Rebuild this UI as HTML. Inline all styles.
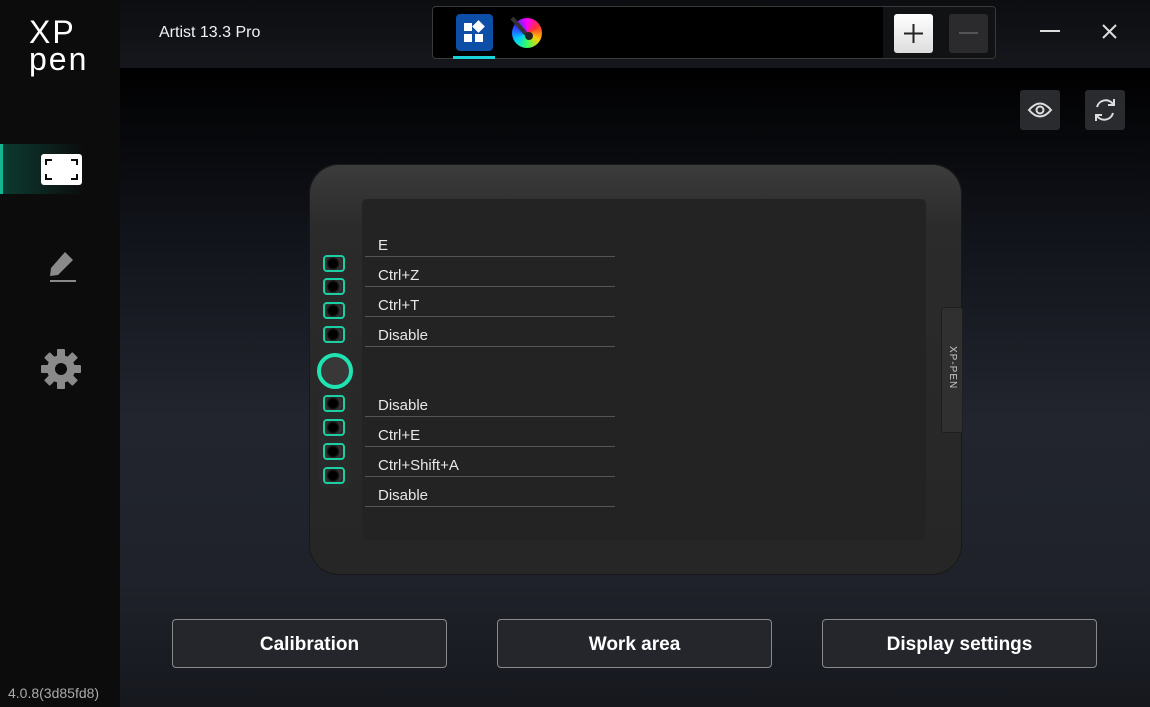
<!DOCTYPE html>
<html><head><meta charset="utf-8"><style>
*{margin:0;padding:0;box-sizing:border-box}
body{width:1150px;height:707px;overflow:hidden;background:#000;font-family:"Liberation Sans",Arial,sans-serif;position:relative;color:#eee}
.side{position:absolute;left:0;top:0;width:120px;height:707px;background:#0c0c0c}
.main{position:absolute;left:120px;top:68px;width:1030px;height:639px;background:linear-gradient(180deg,#000 0%,#11131a 25%,#22252e 55%,#1f222a 80%,#16181e 100%)}
.top{position:absolute;left:120px;top:0;width:1030px;height:68px;background:linear-gradient(180deg,#0c0d10,#15171c)}
.logo{position:absolute;left:29px;top:19px;color:#fff;font-size:32px;line-height:27px;letter-spacing:2px;font-weight:normal}
.act{position:absolute;left:0;top:144px;width:120px;height:50px;background:linear-gradient(90deg,#0c3a30,#0c0c0c 70%);border-left:3px solid #13b592}
.title{position:absolute;left:159px;top:24px;font-size:16px;color:#f2f2f2}
.tabs{position:absolute;left:432px;top:6px;width:564px;height:53px;border:1px solid #3a3a3a;border-radius:4px;background:#000}
.tabs .r{position:absolute;left:450px;top:0;right:0;bottom:0;background:#111214;border-radius:0 4px 4px 0}
.btn{position:absolute;border:1px solid #8a8a8a;border-radius:4px;background:#24262b;color:#fff;font-weight:bold;font-size:19px;text-align:center;line-height:49px;height:49px;width:275px;top:619px}
.sq{position:absolute;width:40px;height:40px;background:#2a2b2f;border-radius:3px}
.tab{position:absolute;left:309px;top:164px;width:653px;height:411px;border-radius:30px;background:linear-gradient(180deg,#3c3c3c,#2b2b2b 15%,#262626);box-shadow:inset 0 0 0 1px #181818}
.scr{position:absolute;left:53px;top:35px;width:564px;height:341px;background:#232323;border-radius:5px}
.row{position:absolute;left:56px;width:250px;height:30px;border-bottom:1px solid #555;font-size:15px;color:#e8e8e8;padding:10px 0 0 13px;line-height:18px}
.k{position:absolute;left:14px;width:22px;height:17px;border:2px solid #1ccfa3;border-radius:4px;background:radial-gradient(circle at 45% 50%,#000 35%,#333 60%,#222)}
.ring{position:absolute;left:8px;top:189px;width:36px;height:36px;border:4px solid #20e3b2;border-radius:50%;background:#383838}
.stab{position:absolute;left:632px;top:143px;width:22px;height:126px;background:#303030;border-radius:3px;border:1px solid #1e1e1e}
</style></head><body>
<div class="side">
<div class="logo">XP<br>pen</div>
<div class="act"></div>
<svg style="position:absolute;left:41px;top:154px" width="41" height="31"><rect width="41" height="31" rx="3" fill="#fff"/><path d="M5 11V6h6M30 6h6v5M36 20v5h-6M11 25H5v-5" stroke="#0c0c0c" stroke-width="2" fill="none"/></svg>
<svg style="position:absolute;left:44px;top:250px" width="34" height="34"><path d="M21 2l8 8-15 15-8 1 1-8z" fill="#8a8a8a"/><rect x="6" y="30" width="26" height="2" fill="#8a8a8a"/></svg>
<svg style="position:absolute;left:40px;top:348px" width="42" height="42" viewBox="-21 -21 42 42"><g fill="#8a8a8a"><circle r="14"/><g id="t"><rect x="-4" y="-20" width="8" height="10" rx="1"/></g><use href="#t" transform="rotate(45)"/><use href="#t" transform="rotate(90)"/><use href="#t" transform="rotate(135)"/><use href="#t" transform="rotate(180)"/><use href="#t" transform="rotate(225)"/><use href="#t" transform="rotate(270)"/><use href="#t" transform="rotate(315)"/></g><circle r="6" fill="#0c0c0c"/></svg>
<div style="position:absolute;left:8px;top:685px;font-size:14px;color:#aaa">4.0.8(3d85fd8)</div>
</div>
<div class="top"></div>
<div class="main"></div>
<div class="title">Artist 13.3 Pro</div>
<div class="tabs"><div class="r"></div>
<svg style="position:absolute;left:23px;top:7px" width="37" height="37"><rect width="37" height="37" rx="4" fill="#0d4ea6"/><rect x="8" y="9" width="8" height="8" fill="#fff"/><rect x="8" y="20" width="8" height="8" fill="#fff"/><rect x="19" y="20" width="8" height="8" fill="#fff"/><rect x="18" y="8" width="9" height="9" fill="#fff" transform="rotate(45 22.5 12.5)"/></svg>
<div style="position:absolute;left:20px;top:49px;width:42px;height:3px;background:#19d3d8"></div>
<div style="position:absolute;left:79px;top:11px;width:30px;height:30px;border-radius:50%;background:conic-gradient(#f0f,#f33,#fc0,#3f6,#0cf,#33f,#f0f)"></div>
<svg style="position:absolute;left:76px;top:8px" width="30" height="30"><path d="M3 3l14 16" stroke="#333" stroke-width="4"/><circle cx="20" cy="21" r="4" fill="#222"/></svg>
<div style="position:absolute;left:461px;top:7px;width:39px;height:39px;background:linear-gradient(#fff,#ddd);border-radius:3px"></div>
<svg style="position:absolute;left:461px;top:7px" width="39" height="39"><path d="M19.5 10v19M10 19.5h19" stroke="#222" stroke-width="2"/></svg>
<div style="position:absolute;left:516px;top:7px;width:39px;height:39px;background:#2b2b2d;border-radius:3px"></div>
<div style="position:absolute;left:526px;top:25px;width:19px;height:2px;background:#555"></div>
</div>
<div style="position:absolute;left:1040px;top:30px;width:20px;height:2px;background:#ddd"></div>
<svg style="position:absolute;left:1101px;top:23px" width="17" height="17"><path d="M2 2l13 13M15 2L2 15" stroke="#ddd" stroke-width="2"/></svg>
<div class="sq" style="left:1020px;top:90px"></div>
<svg style="position:absolute;left:1020px;top:90px" width="40" height="40"><path d="M9 20q11-13 22 0q-11 13-22 0z" stroke="#ddd" stroke-width="2" fill="none"/><circle cx="20" cy="20" r="3.5" stroke="#ddd" stroke-width="2" fill="none"/></svg>
<div class="sq" style="left:1085px;top:90px"></div>
<svg style="position:absolute;left:1085px;top:90px" width="40" height="40"><path d="M12 17a9 9 0 0 1 16-3M28 23a9 9 0 0 1-16 3" stroke="#ddd" stroke-width="2" fill="none"/><path d="M29 9v6h-6M11 31v-6h6" stroke="#ddd" stroke-width="2" fill="none"/></svg>
<div class="tab">
<div style="position:absolute;left:10px;top:82px;width:32px;height:242px;background:#2a2a2a;border-radius:6px"></div>
<div class="scr"></div>
<div class="row" style="top:63px">E</div>
<div class="row" style="top:93px">Ctrl+Z</div>
<div class="row" style="top:123px">Ctrl+T</div>
<div class="row" style="top:153px">Disable</div>
<div class="row" style="top:223px">Disable</div>
<div class="row" style="top:253px">Ctrl+E</div>
<div class="row" style="top:283px">Ctrl+Shift+A</div>
<div class="row" style="top:313px">Disable</div>
<div class="k" style="top:91px"></div><div class="k" style="top:114px"></div><div class="k" style="top:138px"></div><div class="k" style="top:162px"></div>
<div class="ring"></div>
<div class="k" style="top:231px"></div><div class="k" style="top:255px"></div><div class="k" style="top:279px"></div><div class="k" style="top:303px"></div>
<div class="stab"><div style="position:absolute;left:16px;top:38px;transform:rotate(90deg);transform-origin:0 0;white-space:nowrap;font-size:10px;color:#ccc;letter-spacing:1px">XP-PEN</div></div>
</div>
<div class="btn" style="left:172px">Calibration</div>
<div class="btn" style="left:497px">Work area</div>
<div class="btn" style="left:822px">Display settings</div>
</body></html>
